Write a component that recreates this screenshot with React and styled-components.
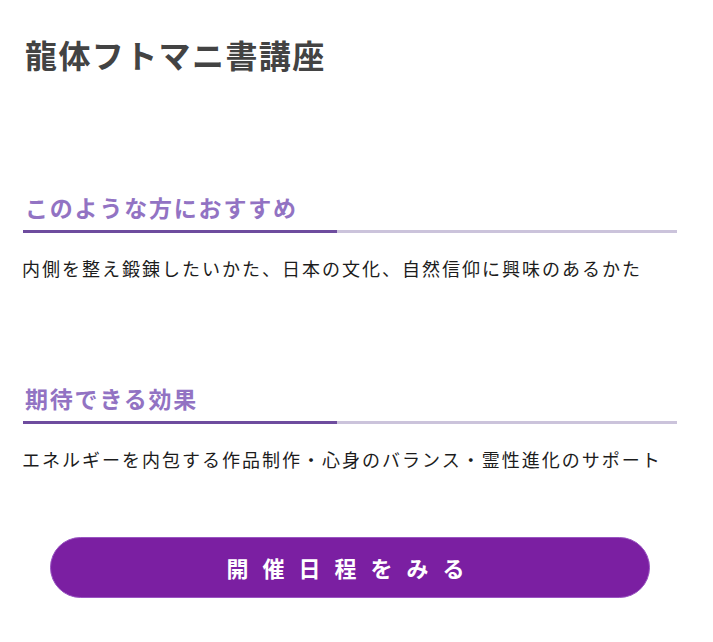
import React from 'react'
import styled, {createGlobalStyle} from 'styled-components'

const GlobalStyle = createGlobalStyle`
    body {
        margin: 0;
        background: #fff;
        font-family: "Noto Sans CJK JP", "Noto Sans", sans-serif;
    }
`

const Page = styled.div`
    padding: 32px 36px 40px 22px;
`

const Title = styled.h1`
    margin: 0 0 0 3px;
    font-size: 32px;
    line-height: 1.4;
    font-weight: 700;
    letter-spacing: 1.4px;
    color: #434343;
`

const Section = styled.section`
    margin-top: ${props => props.$gap}px;
`

const Heading = styled.h2`
    position: relative;
    margin: 0 0 0 1px;
    padding: 0 0 7px 2px;
    font-size: 23px;
    line-height: 1.4;
    font-weight: 700;
    letter-spacing: 1.8px;
    color: #9273c3;
    border-bottom: 3px solid #cbc3db;

    &::after {
        content: '';
        position: absolute;
        left: 0;
        bottom: -3px;
        width: 48%;
        height: 3px;
        background: #6e4c9e;
    }
`

const Text = styled.p`
    margin: 21px 0 0;
    font-size: 18px;
    line-height: 1.6;
    letter-spacing: 2px;
    color: #1c1c1c;
`

const ButtonRow = styled.div`
    display: flex;
    justify-content: center;
    margin-top: 63px;
`

const Button = styled.a`
    display: flex;
    align-items: center;
    justify-content: center;
    width: 600px;
    height: 61px;
    box-sizing: border-box;
    border-radius: 31px;
    border: 1px solid #9a55c2;
    background: #7b1fa2;
    color: #fff;
    font-size: 22px;
    font-weight: 700;
    letter-spacing: 14px;
    padding-left: 6px;
    text-decoration: none;
    cursor: pointer;
`

const sections = [
    {title: 'このような方におすすめ', text: '内側を整え鍛錬したいかた、日本の文化、自然信仰に興味のあるかた', gap: 114},
    {title: '期待できる効果', text: 'エネルギーを内包する作品制作・心身のバランス・霊性進化のサポート', gap: 99},
]

const App = () => {
    return (
        <Page>
            <GlobalStyle />
            <Title>龍体フトマニ書講座</Title>
            {sections.map(s => (
                <Section key={s.title} $gap={s.gap}>
                    <Heading>{s.title}</Heading>
                    <Text>{s.text}</Text>
                </Section>
            ))}
            <ButtonRow>
                <Button>開催日程をみる</Button>
            </ButtonRow>
        </Page>
    )
}

export default App
